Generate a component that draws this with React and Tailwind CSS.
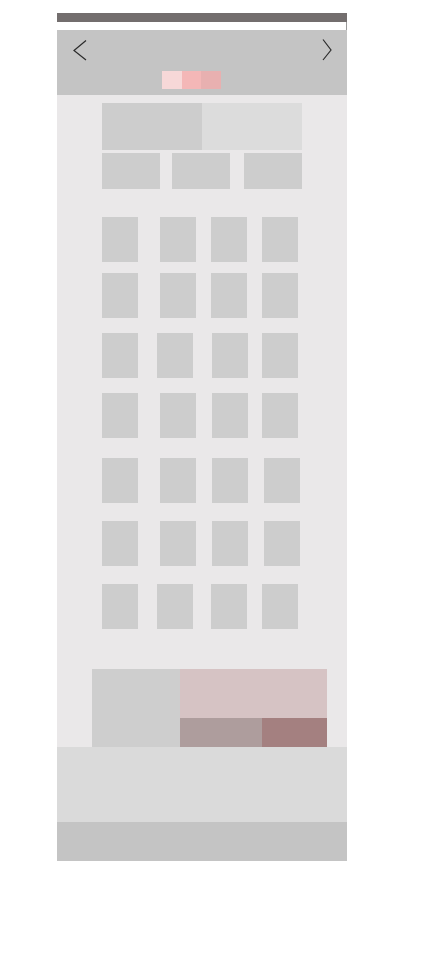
const rows = [
  { mt: "mt-[28px]", cells: ["ml-0", "ml-[22px]", "ml-[15px]", "ml-[15px]"] },
  { mt: "mt-[11px]", cells: ["ml-0", "ml-[22px]", "ml-[15px]", "ml-[15px]"] },
  { mt: "mt-[15px]", cells: ["ml-0", "ml-[19px]", "ml-[19px]", "ml-[14px]"] },
  { mt: "mt-[15px]", cells: ["ml-0", "ml-[22px]", "ml-[16px]", "ml-[14px]"] },
  { mt: "mt-[20px]", cells: ["ml-0", "ml-[22px]", "ml-[16px]", "ml-[16px]"] },
  { mt: "mt-[18px]", cells: ["ml-0", "ml-[22px]", "ml-[16px]", "ml-[16px]"] },
  { mt: "mt-[18px]", cells: ["ml-0", "ml-[19px]", "ml-[18px]", "ml-[15px]"] },
];

function Chevron({ dir }) {
  return (
    <svg width="14" height="22" viewBox="0 0 14 22" fill="none">
      {dir === "left" ? (
        <path d="M13 1.5 L1 11.5 L13 21" stroke="#2b2b2b" strokeWidth="1.2" />
      ) : (
        <path d="M1 0.5 L9 11 L1 21" stroke="#2b2b2b" strokeWidth="1.2" />
      )}
    </svg>
  );
}

export default function App() {
  return (
    <div className="min-h-screen bg-white">
      <div className="ml-[57px] pt-[13px] w-[290px] flex flex-col">
        <div className="h-[9px] bg-[#736e6e]" />
        <div className="h-[8px] bg-white border-r border-[#9a9a9a]" />

        <div className="h-[65px] bg-[#c4c4c4] flex flex-col">
          <div className="flex justify-between items-start pt-[9px] pl-[16px] pr-[11px]">
            <Chevron dir="left" />
            <Chevron dir="right" />
          </div>
          <div className="flex ml-[105px] mt-[10px]">
            <div className="w-[20px] h-[18px] bg-[#f7d8d8]" />
            <div className="w-[19px] h-[18px] bg-[#f4b7b7]" />
            <div className="w-[20px] h-[18px] bg-[#e8b0b0]" />
          </div>
        </div>

        <div className="bg-[#eae8e9] flex flex-col pt-[8px]">
          <div className="ml-[45px] flex">
            <div className="w-[100px] h-[47px] bg-[#cdcdcd]" />
            <div className="w-[100px] h-[47px] bg-[#dcdcdc]" />
          </div>
          <div className="ml-[45px] mt-[3px] flex">
            <div className="w-[58px] h-[36px] bg-[#cdcdcd]" />
            <div className="ml-[12px] w-[58px] h-[36px] bg-[#cdcdcd]" />
            <div className="ml-[14px] w-[58px] h-[36px] bg-[#cdcdcd]" />
          </div>

          {rows.map((row, i) => (
            <div key={i} className={`${row.mt} ml-[45px] flex`}>
              {row.cells.map((ml, j) => (
                <div key={j} className={`${ml} w-[36px] h-[45px] bg-[#cdcdcd]`} />
              ))}
            </div>
          ))}

          <div className="mt-[40px] ml-[35px] w-[235px] h-[78px] flex">
            <div className="w-[88px] bg-[#cecece]" />
            <div className="flex-1 flex flex-col">
              <div className="h-[49px] bg-[#d6c3c4]" />
              <div className="flex-1 flex">
                <div className="w-[82px] bg-[#ae9d9d]" />
                <div className="flex-1 bg-[#a48080]" />
              </div>
            </div>
          </div>
        </div>

        <div className="h-[75px] bg-[#dadada]" />
        <div className="h-[39px] bg-[#c4c4c4]" />
      </div>
    </div>
  );
}
